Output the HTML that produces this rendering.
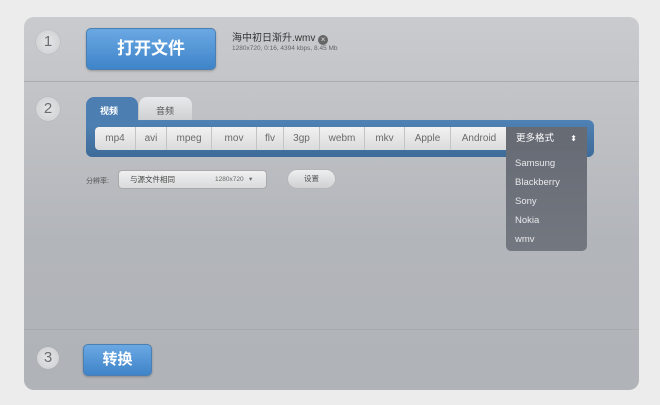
<!DOCTYPE html>
<html><head><meta charset="utf-8"><style>
*{margin:0;padding:0;box-sizing:border-box}
body{width:660px;height:405px;background:#ececec;font-family:"Liberation Sans","Noto Sans CJK SC",sans-serif;position:relative;overflow:hidden}
.panel{position:absolute;left:24px;top:17px;width:615px;height:373px;border-radius:10px;background:linear-gradient(#cacbce,#b2b5ba 60%,#b0b3b8);overflow:hidden}
.sep{position:absolute;left:0;width:615px;height:1px;background:#dfe0e2;border-top:1px solid #a9abaf}
.num{position:absolute;width:24px;height:24px;border-radius:50%;background:radial-gradient(#e4e5e6,#cdced0);color:#6b6d70;font-size:15px;text-align:center;line-height:24px;box-shadow:0 0 1px #999}
.a{position:absolute}
.btn{background:linear-gradient(#6aa8e3,#3f84c9);border:1px solid #4a7fb3;border-radius:5px;color:#fff;font-weight:bold;text-align:center;box-shadow:0 1px 2px rgba(0,0,0,.25)}
.strip{position:absolute;left:95px;top:127px;width:412px;height:23px;background:linear-gradient(#f2f2f2,#dadbdc);border-radius:4px 0 0 4px;display:flex;font-size:10px;color:#6a6a6a}
.strip span{border-right:1px solid #c3c4c6;text-align:center;line-height:23px}
.dd{position:absolute;left:506px;top:127px;width:81px;height:124px;background:linear-gradient(#666a74,#737780);border-radius:0 0 5px 5px;color:#e8e9ec;font-size:9.5px}
</style></head><body>
<div class="panel">
<div class="sep" style="top:64px"></div>
<div class="sep" style="top:312px"></div>
</div>
<div class="num" style="left:36px;top:30px">1</div>
<div class="num" style="left:36px;top:97px">2</div>
<div class="num" style="left:37px;top:347px;width:22px;height:22px;line-height:22px">3</div>
<div class="a btn" style="left:86px;top:28px;width:130px;height:42px;line-height:40px;font-size:17px">打开文件</div>
<div class="a" style="left:232px;top:29px;font-size:10px;color:#333">海中初日渐升.wmv <span style="display:inline-block;width:10px;height:10px;border-radius:50%;background:#666;color:#ddd;font-size:8px;line-height:10px;text-align:center;vertical-align:-1px">×</span></div>
<div class="a" style="left:232px;top:45px;font-size:6.5px;color:#666">1280x720, 0:16, 4394 kbps, 8.45 Mb</div>
<div class="a" style="left:86px;top:120px;width:508px;height:37px;background:linear-gradient(#4f82b5,#3e6b99);border-radius:0 6px 6px 6px"></div>
<div class="a" style="left:86px;top:97px;width:52px;height:26px;background:#4c7eb2;border-radius:8px 8px 0 0;color:#fff;font-size:9px;font-weight:bold;padding:7px 0 0 14px">视频</div>
<div class="a" style="left:139px;top:97px;width:53px;height:23px;background:linear-gradient(#e8e9ea,#cfd0d2);border-radius:8px 8px 0 0;color:#555;font-size:9px;padding:7px 0 0 17px">音频</div>
<div class="strip">
<span style="width:41px">mp4</span><span style="width:31px">avi</span><span style="width:45px">mpeg</span><span style="width:45px">mov</span><span style="width:27px">flv</span><span style="width:36px">3gp</span><span style="width:45px">webm</span><span style="width:40px">mkv</span><span style="width:46px">Apple</span><span style="width:56px;border:none">Android</span>
</div>
<div class="dd">
<div style="height:23px;line-height:23px;padding-left:10px;background:#676b74;color:#fff">更多格式<span style="position:absolute;right:10px;font-size:8px">⬍</span></div>
<div style="padding:4px 0 0 9px;line-height:19px">Samsung<br>Blackberry<br>Sony<br>Nokia<br>wmv</div>
</div>
<div class="a" style="left:86px;top:176px;font-size:7px;color:#555">分辨率:</div>
<div class="a" style="left:118px;top:170px;width:149px;height:19px;background:linear-gradient(#f0f0f1,#d9dadb);border:1px solid #aaa;border-radius:4px;font-size:7.5px;color:#444;line-height:17px;padding-left:11px">与源文件相同<span style="position:absolute;left:96px;font-size:6.5px;color:#666">1280x720 &nbsp; ▾</span></div>
<div class="a" style="left:287px;top:169px;width:49px;height:20px;background:linear-gradient(#eeeeef,#d0d1d3);border:1px solid #b5b6b8;border-radius:10px;font-size:7.5px;color:#555;text-align:center;line-height:18px">设置</div>
<div class="a btn" style="left:83px;top:344px;width:69px;height:32px;line-height:30px;font-size:15px">转换</div>
</body></html>
